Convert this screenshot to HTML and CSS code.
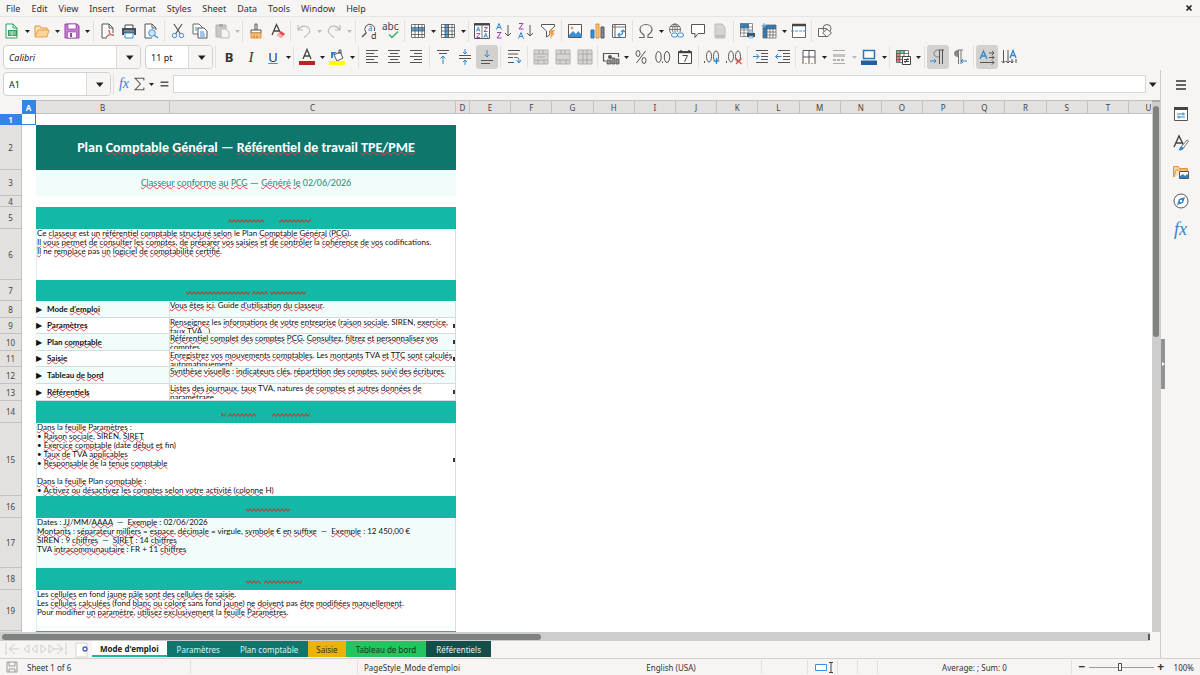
FILE: index.html
```html
<!DOCTYPE html>
<html lang="fr">
<head>
<meta charset="utf-8">
<title>Plan comptable</title>
<link rel="stylesheet" href="styles.css">
</head>
<body>
<svg class="defs" aria-hidden="true">
  <defs>
    <pattern id="zig" width="4" height="4" patternUnits="userSpaceOnUse"><path d="M0 3.500 2 .8 4 3.500" fill="none" stroke="#a0503f" stroke-width="1.200"/></pattern>
    <symbol id="drop" viewBox="0 0 8 16"><path d="M2 7h5L4.500 10z" fill="currentColor"/></symbol>
  </defs>
</svg>

<header>
  <nav class="menubar">
    <button>File</button><button>Edit</button><button>View</button><button>Insert</button><button>Format</button><button>Styles</button><button>Sheet</button><button>Data</button><button>Tools</button><button>Window</button><button>Help</button>
    <button class="close" aria-label="Close document"><svg viewBox="0 0 8 8"><path d="M1.500 1.500l5 5m0-5l-5 5" stroke="#222" stroke-width="1.700"/></svg></button>
  </nav>

  <div class="toolbar">
    <button aria-label="New"><svg viewBox="0 0 16 16"><path d="M2 1h7l4 4v10H2z" fill="#fff" stroke="#2f9e5b"/><path d="M9 1v4h4" fill="none" stroke="#2f9e5b"/><path d="M4 7h9v6H4z" fill="#2f9e5b"/><path d="M5 9h7M5 11h7M8 8v5" stroke="#dff5e6" stroke-width=".8"/></svg></button>
    <button class="arrow" aria-label="New options"><svg><use href="#drop"/></svg></button>
    <button aria-label="Open"><svg viewBox="0 0 16 16"><path d="M1 13V3h5l1 2h6v2" fill="#fbe3bd" stroke="#e0963a"/><path d="M1 14 4 7h11l-2 7z" fill="#fbd49a" stroke="#e8a04a"/></svg></button>
    <button class="arrow" aria-label="Open options"><svg><use href="#drop"/></svg></button>
    <button aria-label="Save"><svg viewBox="0 0 16 16"><path d="M1 1h12l2 2v12H1z" fill="#c77fd0" stroke="#9a3fa8"/><path d="M4 1h8v5H4zM3.500 9h9v6h-9z" fill="#fff" stroke="#9a3fa8" stroke-width=".7"/><path d="M6 10h2v4H6z" fill="#9a3fa8"/></svg></button>
    <button class="arrow" aria-label="Save options"><svg><use href="#drop"/></svg></button>
    <i class="sep"></i>
    <button aria-label="Export as PDF"><svg viewBox="0 0 16 16"><path d="M3 1h7l4 4v5M3 1v14h5" fill="#fff" stroke="#555"/><path d="M10 1v4h4" fill="none" stroke="#555"/><path d="M7 14c4-2 4-5 3-7 0 4 3 6 5 5-3-1-6 0-8 2z" fill="none" stroke="#e0535b"/></svg></button>
    <button aria-label="Print"><svg viewBox="0 0 16 16"><path d="M4 5V2h8v3" fill="#fff" stroke="#444"/><path d="M1 5h14v7h-2v-2H3v2H1z" fill="#4a5054"/><path d="M4 10h8v5H4z" fill="#fff" stroke="#3b8fd6"/><path d="M3 8h10" stroke="#8fc4ee"/></svg></button>
    <button aria-label="Print preview"><svg viewBox="0 0 16 16"><path d="M9 15H2V1h7l4 4v2" fill="#fff" stroke="#555"/><path d="M9 1v4h4" fill="none" stroke="#555"/><circle cx="9" cy="10" r="3.300" fill="#cfe6f8" stroke="#3b8fd6"/><path d="M11.500 12.500 15 15" stroke="#3b8fd6" stroke-width="1.300"/></svg></button>
    <i class="sep"></i>
    <button aria-label="Cut"><svg viewBox="0 0 16 16"><path d="M4 1l6.500 10M12 1 5.500 11" stroke="#555" stroke-width="1.200"/><circle cx="4.500" cy="12.500" r="2.200" fill="none" stroke="#3b8fd6"/><circle cx="11.500" cy="12.500" r="2.200" fill="none" stroke="#3b8fd6"/></svg></button>
    <button aria-label="Copy"><svg viewBox="0 0 16 16"><path d="M1 1h6l3 3v7H1z" fill="#fff" stroke="#666"/><path d="M6 5h6l3 3v7H6z" fill="#fff" stroke="#555"/><path d="M3 5h3M3 7h2M8 9h4M8 11h5M8 13h5" stroke="#3b8fd6"/></svg></button>
    <button disabled aria-label="Paste"><svg viewBox="0 0 16 16"><path d="M2 2h10v12H2z" fill="#c9c8c6" stroke="#b0afad"/><path d="M5 1h4v3H5z" fill="#aaa"/><path d="M7 6h5l3 3v6H7z" fill="#f5f4f2" stroke="#bbb"/></svg></button>
    <button class="arrow" disabled aria-label="Paste options"><svg><use href="#drop"/></svg></button>
    <i class="sep tight"></i>
    <button aria-label="Clone formatting"><svg viewBox="0 0 16 16"><path d="M7 1h2v6H7z" fill="#fff" stroke="#555"/><path d="M3 7h10v3H3z" fill="#fff" stroke="#555"/><path d="M3 10h10v5H3z" fill="#fbc27e" stroke="#e8913a"/><path d="M6 12v3M9 12v3" stroke="#d97a20"/></svg></button>
    <button aria-label="Clear formatting"><svg viewBox="0 0 16 16"><path d="M2 12 6.500 1.500 10 9M4 8h5" fill="none" stroke="#444" stroke-width="1.300"/><path d="M7 12l4-4 4 3-4 4z" fill="#e5484d"/><path d="M7 12l2-2 4 3-2 2z" fill="#f6b5b8"/></svg></button>
    <i class="sep tight"></i>
    <button disabled aria-label="Undo"><svg viewBox="0 0 16 16"><path d="M2 2v5h5M2.500 6.500C5 2.500 11 2 13 5.500s0 5-5 9" fill="none" stroke="#bdbcba" stroke-width="1.200"/></svg></button>
    <button class="arrow" disabled aria-label="Undo list"><svg><use href="#drop"/></svg></button>
    <button disabled aria-label="Redo"><svg viewBox="0 0 16 16"><path d="M14 2v5H9M13.500 6.500C11 2.500 5 2 3 5.500s0 5 5 9" fill="none" stroke="#bdbcba" stroke-width="1.200"/></svg></button>
    <button class="arrow" disabled aria-label="Redo list"><svg><use href="#drop"/></svg></button>
    <i class="sep"></i>
    <button aria-label="Find and replace"><svg viewBox="0 0 16 16"><path d="M5 9.500A5 5 0 1 1 13.500 8" fill="none" stroke="#555"/><path d="M5.500 9.500 1 14" stroke="#555" stroke-width="1.500"/><text x="7" y="8" font-size="8" fill="#2a86cf">a</text><text x="10" y="16" font-size="9" fill="#333">d</text></svg></button>
    <button aria-label="Spelling"><svg viewBox="0 0 16 16"><text x="-1" y="7" font-size="10" fill="#444">abc</text><path d="M6 11.500l3 3 6-6" fill="none" stroke="#33b36b" stroke-width="1.500"/></svg></button>
    <i class="sep"></i>
    <button aria-label="Row"><svg viewBox="0 0 16 16"><path d="M1 1h14v14H1z" fill="#fff"/><path d="M1 5h14v3H1z" fill="#4fa3e3"/><path d="M1.500 1.500h13v13h-13zM1 4.500h14M1 8h14M1 11.500h14M5 1v14M8.500 1v14M12 1v14" fill="none" stroke="#555" stroke-width=".8"/></svg></button>
    <button class="arrow" aria-label="Row options"><svg><use href="#drop"/></svg></button>
    <button aria-label="Column"><svg viewBox="0 0 16 16"><path d="M1 1h14v14H1z" fill="#fff"/><path d="M5 1h4v14H5z" fill="#4fa3e3"/><path d="M1.500 1.500h13v13h-13zM1 4.500h14M1 8h14M1 11.500h14M5 1v14M8.500 1v14M12 1v14" fill="none" stroke="#555" stroke-width=".8"/></svg></button>
    <button class="arrow" aria-label="Column options"><svg><use href="#drop"/></svg></button>
    <i class="sep tight"></i>
    <button aria-label="Sort"><svg viewBox="0 0 16 16"><path d="M.5.500h15v15H.5z" fill="#fff" stroke="#555"/><path d="M0 1.500h16" stroke="#444" stroke-width="2"/><path d="M8 2v14" stroke="#777"/><g fill="none" stroke="#2a86cf" stroke-width=".9"><path d="M2.500 8.500 4.250 4 6 8.500M3 7h2.500M10 14.500l1.750-4.500 1.750 4.500M10.500 13H13"/></g><g fill="none" stroke="#a33bb5" stroke-width=".9"><path d="M2.500 10.500H6l-3.500 4H6M10 4.500h3.500L10 8.500h3.500"/></g></svg></button>
    <button aria-label="Sort ascending"><svg viewBox="0 0 16 16"><path d="M.5 6.500 3 .5l2.500 6M1.500 4.500h3" fill="none" stroke="#2a86cf"/><path d="M1 9.500h4l-4 5.500h4.500" fill="none" stroke="#a33bb5"/><path d="M12 2v11m-3-3 3 3 3-3" fill="none" stroke="#555"/></svg></button>
    <button aria-label="Sort descending"><svg viewBox="0 0 16 16"><path d="M1 .5h4L1 6h4.500" fill="none" stroke="#a33bb5"/><path d="M.5 15.500 3 9.500l2.500 6M1.500 13.500h3" fill="none" stroke="#2a86cf"/><path d="M12 2v11m-3-3 3 3 3-3" fill="none" stroke="#555"/></svg></button>
    <button aria-label="AutoFilter"><svg viewBox="0 0 16 16"><path d="M1.500 1.500h13v2L9.500 8v4l-3 2V8l-5-4.500z" fill="#fff" stroke="#555"/><path d="M10 7h5l-2 3h2l-5 6 1-5H9z" fill="#f2a44a"/></svg></button>
    <i class="sep"></i>
    <button aria-label="Insert image"><svg viewBox="0 0 16 16"><path d="M1.500 1.500h13v13h-13z" fill="#fff" stroke="#555"/><circle cx="5" cy="5" r="1.500" fill="#f2a44a"/><path d="M2 14v-2l4-4 3 3 2-3 4 4v2z" fill="#3b8fd6"/></svg></button>
    <button aria-label="Insert chart"><svg viewBox="0 0 16 16"><path d="M2 7h3v8H2z" fill="#3b8fd6" stroke="#2670b0"/><path d="M7 1h3v14H7z" fill="#fbc27e" stroke="#dc9238"/><path d="M12 4h3v11h-3z" fill="#888" stroke="#555"/></svg></button>
    <button aria-label="Pivot table"><svg viewBox="0 0 16 16"><path d="M1.500 1.500h13v13h-13z" fill="#fff" stroke="#666"/><path d="M2 4h12M4 2v12" stroke="#777" stroke-width="1.200"/><path d="M7 12h2c2 0 3-2 3-5m-2 2 2-2 2 2M9 10l-2 2 2 2" fill="none" stroke="#3b8fd6" stroke-width="1.200"/></svg></button>
    <i class="sep"></i>
    <button aria-label="Special character"><svg viewBox="0 0 16 16"><path d="M1 14.500h5V12C3 10 2 8.500 2 6.500 2 3.500 4.500 1.500 8 1.500s6 2 6 5c0 2-1 3.500-4 5.500v2.500h5" fill="none" stroke="#666" stroke-width="1.200"/></svg></button>
    <button class="arrow" aria-label="Special character list"><svg><use href="#drop"/></svg></button>
    <button aria-label="Hyperlink"><svg viewBox="0 0 16 16"><circle cx="7" cy="6.500" r="5.500" fill="none" stroke="#666"/><path d="M1.500 6.500h11M7 1v11M3 3.500h8M3 9.500h5" stroke="#666" stroke-width=".8"/><ellipse cx="7" cy="6.500" rx="2.500" ry="5.500" fill="none" stroke="#666" stroke-width=".8"/><path d="M3 9h13v7H3z" fill="#f5f4f2"/><rect x="3.500" y="10" width="6" height="4" rx="2" fill="none" stroke="#3b8fd6"/><rect x="9.500" y="10" width="6" height="4" rx="2" fill="none" stroke="#3b8fd6"/></svg></button>
    <button aria-label="Comment"><svg viewBox="0 0 16 16"><path d="M1.500 1.500h13v9H8l-3 4v-4H1.500z" fill="#fff" stroke="#555"/></svg></button>
    <button disabled aria-label="Headers and footers"><svg viewBox="0 0 16 16"><path d="M3 1h7l3 3v11H3z" fill="#d5d4d2" stroke="#bbb"/><path d="M4 12h8v2H4z" fill="#bbb"/></svg></button>
    <i class="sep"></i>
    <button aria-label="Define print area"><svg viewBox="0 0 16 16"><path d="M1.500.500h12v13h-12z" fill="#fff"/><path d="M1 .5h9v5H1z" fill="#2f86cc"/><path d="M1.500.500h12v13h-12zM1 4h13M1 7h13M1 10h13M5 1v13M9 1v13" fill="none" stroke="#666" stroke-width=".7"/><path d="M8 10h8v4H8z" fill="#4a5054"/><path d="M10 8h4v2h-4zM10 13h4v2h-4z" fill="#d6eafa" stroke="#3b8fd6" stroke-width=".6"/></svg></button>
    <button aria-label="Freeze rows and columns"><svg viewBox="0 0 16 16"><path d="M2 2h13v13H2z" fill="#fff"/><path d="M2 2h13v4H2zM2 2h4v13H2z" fill="#2f86cc"/><path d="M2 2h13v13H2zM2 6h13M2 9h13M2 12h13M6 2v13M9 2v13M12 2v13" fill="none" stroke="#555" stroke-width=".7"/><path d="M3 0v5M.5 2.500h5" stroke="#6ab4ee"/></svg></button>
    <button class="arrow" aria-label="Freeze options"><svg><use href="#drop"/></svg></button>
    <button aria-label="Split window"><svg viewBox="0 0 16 16"><path d="M1.500 1.500h13v13h-13z" fill="#fff" stroke="#666"/><path d="M1 2h14" stroke="#444" stroke-width="2.500"/><path d="M0 8h16" stroke="#3b8fd6" stroke-dasharray="3 1"/></svg></button>
    <i class="sep tight"></i>
    <button aria-label="Draw functions"><svg viewBox="0 0 16 16"><path d="M1.500 5.500h8v8h-8z" fill="#fff" stroke="#666"/><circle cx="10" cy="5.500" r="4" fill="none" stroke="#666"/><path d="M10 6l4.500 4-4.500 4-4.500-4z" fill="#f5f4f2" stroke="#666"/></svg></button>
  </div>

  <div class="toolbar format">
    <div class="combo font"><input aria-label="Font name" value="Calibri"><button aria-label="Font list"><svg><use href="#drop"/></svg></button></div>
    <div class="combo size"><input aria-label="Font size" value="11 pt"><button aria-label="Size list"><svg><use href="#drop"/></svg></button></div>
    <i class="sep"></i>
    <button class="letter bold" aria-label="Bold">B</button>
    <button class="letter italic" aria-label="Italic">I</button>
    <button class="letter under" aria-label="Underline">U</button>
    <button class="arrow" aria-label="Underline options"><svg><use href="#drop"/></svg></button>
    <i class="sep tight"></i>
    <button aria-label="Font color"><svg viewBox="0 0 16 16"><path d="M4 10 8 .5 12 10M5.500 7h5" fill="none" stroke="#444" stroke-width="1.300"/><path d="M0 12h16v4H0z" fill="#c0211f"/></svg></button>
    <button class="arrow" aria-label="Font color options"><svg><use href="#drop"/></svg></button>
    <button aria-label="Highlighting"><svg viewBox="0 0 16 16"><path d="M5 6l6-3 3 6-6 3z" fill="#fff" stroke="#555"/><path d="M10 5V1h2v4" fill="none" stroke="#555"/><path d="M2 9V3h6L4 6v3z" fill="#2f86cc"/><path d="M0 12h16v4H0z" fill="#ff0"/></svg></button>
    <button class="arrow" aria-label="Highlighting options"><svg><use href="#drop"/></svg></button>
    <i class="sep"></i>
    <button aria-label="Align left"><svg viewBox="0 0 16 16"><path d="M2 1.500h12M2 4.500h8M2 7.500h12M2 10.500h8M2 13.500h12" stroke="#555"/></svg></button>
    <button aria-label="Align center"><svg viewBox="0 0 16 16"><path d="M2 1.500h12M4 4.500h8M2 7.500h12M4 10.500h8M2 13.500h12" stroke="#555"/></svg></button>
    <button aria-label="Align right"><svg viewBox="0 0 16 16"><path d="M2 1.500h12M6 4.500h8M2 7.500h12M6 10.500h8M2 13.500h12" stroke="#555"/></svg></button>
    <i class="sep"></i>
    <button aria-label="Align top"><svg viewBox="0 0 16 16"><path d="M2 1.500h12M4 4.500h8" stroke="#555"/><path d="M8 15V7M5.500 9.500 8 7l2.500 2.500" fill="none" stroke="#2f86cc"/></svg></button>
    <button aria-label="Center vertically"><svg viewBox="0 0 16 16"><path d="M2 6.500h12M2 9.500h12" stroke="#555"/><path d="M8 0v5M6 3l2 2 2-2M8 16v-5M6 13l2-2 2 2" fill="none" stroke="#2f86cc"/></svg></button>
    <button class="on" aria-label="Align bottom"><svg viewBox="0 0 16 16"><path d="M2 11.500h12M2 14.500h9" stroke="#555"/><path d="M8 1v7M5.500 5.500 8 8l2.500-2.500" fill="none" stroke="#2f86cc"/></svg></button>
    <i class="sep"></i>
    <button aria-label="Wrap text"><svg viewBox="0 0 16 16"><path d="M2 1.500h12M2 5h10M2 8.500h5M2 13.500h6" stroke="#555"/><path d="M8 8.500h3c2 0 2 2 2 5M10.500 11l2.500 3 2-3" fill="none" stroke="#2f86cc"/></svg></button>
    <i class="sep"></i>
    <button disabled aria-label="Merge and center"><svg viewBox="0 0 16 16"><path d="M1 1h14v14H1z" fill="#d6d5d3" stroke="#b3b2b0"/><path d="M1 5h14M1 11h14M6 1v4m4-4v4M5 11v4m6-4v4M4 8h8" stroke="#aaa9a7"/></svg></button>
    <button disabled aria-label="Merge cells"><svg viewBox="0 0 16 16"><path d="M1 1h14v14H1z" fill="#d6d5d3" stroke="#b3b2b0"/><path d="M1 5h14M1 11h14M6 1v4m4-4v4M5 11v4m6-4v4" stroke="#aaa9a7"/></svg></button>
    <button disabled aria-label="Unmerge cells"><svg viewBox="0 0 16 16"><path d="M1 1h14v14H1z" fill="#d6d5d3" stroke="#b3b2b0"/><path d="M1 5h14M1 11h14M6 1v14m4-14v14" stroke="#aaa9a7"/></svg></button>
    <i class="sep tight"></i>
    <button aria-label="Format as currency"><svg viewBox="0 0 16 16"><path d="M3 12H.5V4.500h15V8" fill="none" stroke="#555" stroke-width="1.200"/><circle cx="7" cy="8" r="2" fill="#555"/><path d="M4 11h4v4H4zM9 9h3v6H9zM13 10h3v5h-3z" fill="#999" stroke="#444" stroke-width=".7"/></svg></button>
    <button class="arrow" aria-label="Currency list"><svg><use href="#drop"/></svg></button>
    <button aria-label="Format as percent"><svg viewBox="0 0 16 16"><path d="M12.500 2l-9 12" stroke="#555"/><ellipse cx="5" cy="4.500" rx="2" ry="3" fill="none" stroke="#555"/><ellipse cx="11" cy="11.500" rx="2" ry="3" fill="none" stroke="#555"/></svg></button>
    <button aria-label="Format as number"><svg viewBox="0 0 16 16"><ellipse cx="3.500" cy="8" rx="2.700" ry="5.500" fill="none" stroke="#555"/><ellipse cx="12" cy="8" rx="2.700" ry="5.500" fill="none" stroke="#555"/><path d="M7.500 12.500v1.500" stroke="#555"/></svg></button>
    <button aria-label="Format as date"><svg viewBox="0 0 16 16"><path d="M1.500 2.500h13v12h-13z" fill="#fff" stroke="#444"/><path d="M1 3.500h14M4 1v3M12 1v3" stroke="#444" stroke-width="1.500"/><path d="M5.500 6.500h5L7.500 13" fill="none" stroke="#444"/></svg></button>
    <i class="sep"></i>
    <button aria-label="Add decimal place"><svg viewBox="0 0 16 16"><path d="M.5 12v2" stroke="#555"/><ellipse cx="5" cy="7.500" rx="2.500" ry="5.500" fill="none" stroke="#555"/><ellipse cx="12" cy="7.500" rx="2.500" ry="5.500" fill="none" stroke="#555"/><path d="M12.500 9v6M9.500 12h6" stroke="#2f86cc" stroke-width="1.200"/></svg></button>
    <button aria-label="Delete decimal place"><svg viewBox="0 0 16 16"><path d="M.5 12v2" stroke="#555"/><ellipse cx="5" cy="7.500" rx="2.500" ry="5.500" fill="none" stroke="#555"/><ellipse cx="12" cy="7.500" rx="2.500" ry="5.500" fill="none" stroke="#555"/><path d="M10 9.500l5.500 5.500m0-5.500L10 15" stroke="#e04a50" stroke-width="1.200"/></svg></button>
    <i class="sep"></i>
    <button aria-label="Increase indent"><svg viewBox="0 0 16 16"><path d="M3 1.500h12M8 4.500h7M8 7.500h7M8 10.500h7M3 13.500h12" stroke="#555"/><path d="M0 7.500h6M3.500 5 6 7.500 3.500 10" fill="none" stroke="#2f86cc"/></svg></button>
    <button aria-label="Decrease indent"><svg viewBox="0 0 16 16"><path d="M3 1.500h12M8 4.500h7M8 7.500h7M8 10.500h7M3 13.500h12" stroke="#555"/><path d="M6.500 7.500h-6M3 5 .5 7.500 3 10" fill="none" stroke="#2f86cc"/></svg></button>
    <i class="sep tight"></i>
    <button aria-label="Borders"><svg viewBox="0 0 16 16"><path d="M2 15V1.500h12V15M8 1v14M2 8h12" fill="#fff" stroke="#555"/><path d="M1 14.500h14" stroke="#e8a04a" stroke-dasharray="2 1"/></svg></button>
    <button class="arrow" aria-label="Borders options"><svg><use href="#drop"/></svg></button>
    <button disabled aria-label="Border style"><svg viewBox="0 0 16 16"><path d="M2 1.500h12M2 14.500h12" stroke="#aaa"/><path d="M2 5h12v3H2z" fill="#c4c3c1"/><path d="M2 11h12" stroke="#b3b2b0" stroke-width="2" stroke-dasharray="3 1"/></svg></button>
    <button class="arrow" disabled aria-label="Border style options"><svg><use href="#drop"/></svg></button>
    <button aria-label="Border color"><svg viewBox="0 0 16 16"><path d="M2.500 1.500h11v8h-11z" fill="#fff" stroke="#2f76b5" stroke-width="1.500"/><path d="M0 11.500h16V16H0z" fill="#1f5fa5"/></svg></button>
    <button class="arrow" aria-label="Border color options"><svg><use href="#drop"/></svg></button>
    <i class="sep tight"></i>
    <button aria-label="Conditional formatting"><svg viewBox="0 0 16 16"><path d="M1.500 1.500h12v12h-12z" fill="#fff"/><path d="M1 1h9v3H1z" fill="#6fcf8f"/><path d="M1 4h4v9H1z" fill="#e77a7a"/><path d="M1.500 1.500h12v12h-12zM1 4.500h13M1 7.500h13M1 10.500h13M5 1v13M9 1v13" fill="none" stroke="#555" stroke-width=".8"/><path d="M7.500 7.500h8v8h-8z" fill="#fff" stroke="#444"/><path d="M9 10.500h5M9 12.500h5M13 9l-3 5" stroke="#444"/></svg></button>
    <button class="arrow" aria-label="Conditional formatting list"><svg><use href="#drop"/></svg></button>
    <i class="sep"></i>
    <button class="on" aria-label="Left to right"><svg viewBox="0 0 16 16"><path d="M9 1h5M9.500 1v14M12.500 1v14" stroke="#555"/><path d="M9 1C5 1 4 3 4 4.500S5 8 9 8" fill="none" stroke="#777"/><path d="M0 12h6M4 10l2 2-2 2" fill="none" stroke="#2f86cc"/></svg></button>
    <button aria-label="Right to left"><svg viewBox="0 0 16 16"><path d="M6 1h5M6.500 1v14M9 1v14" stroke="#777"/><path d="M6 1C3 1 2 3 2 4.500S3 8 6 8z" fill="#888"/><path d="M15 12H9M11 10l-2 2 2 2" fill="none" stroke="#2f86cc"/></svg></button>
    <i class="sep"></i>
    <button class="on" aria-label="Text direction horizontal"><svg viewBox="0 0 16 16"><path d="M1 10 4.500 2 8 10M2.500 7h4" fill="none" stroke="#2f86cc" stroke-width="1.300"/><path d="M10 4h5M13 2l2 2-2 2M10 8.500h5M13 6.500l2 2-2 2M1 13.500h14M13 11.500l2 2-2 2" fill="none" stroke="#555"/></svg></button>
    <button aria-label="Text direction vertical"><svg viewBox="0 0 16 16"><path d="M9 9 12 1.500 15 9M10 6.500h4" fill="none" stroke="#2f86cc" stroke-width="1.300"/><path d="M2.500 1v13M.5 12l2 2 2-2M7 1v13M5 12l2 2 2-2M11 10v4M9.500 12l1.500 2 1.500-2M15 10v4" fill="none" stroke="#555"/></svg></button>
  </div>
</header>

<main>
  <section class="work">
    <div class="formula">
      <div class="combo name"><input aria-label="Name box" value="A1"><button aria-label="Names"><svg><use href="#drop"/></svg></button></div>
      <i class="sep"></i>
      <button class="fx" aria-label="Function wizard">fx</button>
      <button class="sigma" aria-label="Select function"><svg viewBox="0 0 16 16"><path d="M13 4V1.500H3l6 6.500-6 6.500h10V12" fill="none" stroke="#555" stroke-width="1.200"/></svg></button>
      <button class="arrow" aria-label="Function list"><svg><use href="#drop"/></svg></button>
      <button class="eq" aria-label="Formula"><svg viewBox="0 0 16 16"><path d="M4 6h9M4 10h9" stroke="#555" stroke-width="1.800"/></svg></button>
      <input class="line" aria-label="Input line">
      <button class="expand" aria-label="Expand formula bar"><svg><use href="#drop"/></svg></button>
    </div>

    <div class="view">
      <div class="sheet">
        <table>
          <colgroup><col class="c-num"><col class="c-a"><col class="c-b"><col class="c-c"><col class="c-d"><col span="16"><col class="c-u"></colgroup>
          <thead><tr><td class="corner"></td><th class="sel">A</th><th>B</th><th>C</th><th>D</th><th>E</th><th>F</th><th>G</th><th>H</th><th>I</th><th>J</th><th>K</th><th>L</th><th>M</th><th>N</th><th>O</th><th>P</th><th>Q</th><th>R</th><th>S</th><th>T</th><th class="cut">U</th></tr></thead>
          <tbody>
            <tr class="h11"><th class="sel">1</th><td class="cursor"></td><td colspan="2"></td><td colspan="18"></td></tr>
            <tr class="h45"><th>2</th><td></td><td colspan="2" class="title">Plan <u>Comptable</u> <u>Général</u> — <u>Référentiel</u> <u>de</u> travail <u>TPE/PME</u></td></tr>
            <tr class="h26"><th>3</th><td></td><td colspan="2" class="sub"><u>Classeur</u> <u>conforme</u> <u>au</u> <u>PCG</u> — <u>Généré</u> <u>le</u> 02/06/2026</td></tr>
            <tr class="h11"><th>4</th><td></td><td colspan="2"></td></tr>
            <tr class="h22"><th>5</th><td></td><td colspan="2" class="band"><svg viewBox="0 0 420 4"><path d="M192 0h36v4h-36zM243 0h32v4h-32z" fill="url(#zig)"/></svg></td></tr>
            <tr class="h51"><th>6</th><td></td><td colspan="2" class="note"><p>Ce <u>classeur</u> est <u>un</u> <u>référentiel</u> <u>comptable</u> <u>structuré</u> <u>selon</u> le Plan <u>Comptable</u> <u>Général</u> (<u>PCG</u>).</p><p><u>Il</u> <u>vous</u> <u>permet</u> <u>de</u> <u>consulter</u> <u>les</u> <u>comptes</u>, <u>de</u> <u>préparer</u> <u>vos</u> <u>saisies</u> <u>et</u> <u>de</u> <u>contrôler</u> la <u>cohérence</u> <u>de</u> <u>vos</u> codifications.</p><p><u>Il</u> ne <u>remplace</u> pas <u>un</u> <u>logiciel</u> <u>de</u> <u>comptabilité</u> <u>certifié</u>.</p></td></tr>
            <tr class="h21"><th>7</th><td></td><td colspan="2" class="band"><svg viewBox="0 0 420 4"><path d="M150 0h64v4h-64zM216 0h16v4h-16zM234 0h36v4h-36z" fill="url(#zig)"/></svg></td></tr>
            <tr class="h17 item mint"><th>8</th><td></td><td class="key"><b>▶</b>Mode <u>d'emploi</u></td><td class="desc"><div><u>Vous</u> <u>êtes</u> <u>ici</u>. Guide <u>d'utilisation</u> <u>du</u> <u>classeur</u>.</div></td></tr>
            <tr class="h16 item"><th>9</th><td></td><td class="key"><b>▶</b><u>Paramètres</u></td><td class="desc more"><div><u>Renseignez</u> les <u>informations</u> <u>de</u> <u>votre</u> <u>entreprise</u> (<u>raison</u> <u>sociale</u>, SIREN, <u>exercice</u>,<br><u>taux</u> TVA...).</div></td></tr>
            <tr class="h17 item mint"><th>10</th><td></td><td class="key"><b>▶</b>Plan <u>comptable</u></td><td class="desc more"><div><u>Référentiel</u> <u>complet</u> <u>des</u> <u>comptes</u> <u>PCG</u>. <u>Consultez</u>, <u>filtrez</u> <u>et</u> <u>personnalisez</u> <u>vos</u><br><u>comptes</u>.</div></td></tr>
            <tr class="h16 item"><th>11</th><td></td><td class="key"><b>▶</b><u>Saisie</u></td><td class="desc more"><div><u>Enregistrez</u> <u>vos</u> <u>mouvements</u> <u>comptables</u>. Les <u>montants</u> TVA <u>et</u> <u>TTC</u> <u>sont</u> <u>calculés</u><br><u>automatiquement</u>.</div></td></tr>
            <tr class="h17 item mint"><th>12</th><td></td><td class="key"><b>▶</b>Tableau <u>de</u> <u>bord</u></td><td class="desc"><div><u>Synthèse</u> <u>visuelle</u> : <u>indicateurs</u> <u>clés</u>, <u>répartition</u> <u>des</u> <u>comptes</u>, <u>suivi</u> <u>des</u> <u>écritures</u>.</div></td></tr>
            <tr class="h17 item"><th>13</th><td></td><td class="key"><b>▶</b><u>Référentiels</u></td><td class="desc more"><div><u>Listes</u> <u>des</u> <u>journaux</u>, <u>taux</u> TVA, natures <u>de</u> <u>comptes</u> <u>et</u> <u>autres</u> <u>données</u> <u>de</u><br><u>paramétrage</u>.</div></td></tr>
            <tr class="h22"><th>14</th><td></td><td colspan="2" class="band"><svg viewBox="0 0 420 4"><path d="M185 0h5v4h-5zM192 0h28v4h-28zM236 0h38v4h-38z" fill="url(#zig)"/></svg></td></tr>
            <tr class="h73"><th>15</th><td></td><td colspan="2" class="note more"><p><u>Dans</u> la <u>feuille</u> <u>Paramètres</u> :</p><p>• <u>Raison</u> <u>sociale</u>, SIREN, <u>SIRET</u></p><p>• <u>Exercice</u> <u>comptable</u> (date <u>début</u> <u>et</u> fin)</p><p>• <u>Taux</u> <u>de</u> TVA <u>applicables</u></p><p>• <u>Responsable</u> <u>de</u> la <u>tenue</u> <u>comptable</u></p><p>&nbsp;</p><p><u>Dans</u> la <u>feuille</u> Plan <u>comptable</u> :</p><p>• <u>Activez</u> <u>ou</u> <u>désactivez</u> <u>les</u> <u>comptes</u> <u>selon</u> <u>votre</u> <u>activité</u> (<u>colonne</u> H)</p></td></tr>
            <tr class="h22"><th>16</th><td></td><td colspan="2" class="band"><svg viewBox="0 0 420 4"><path d="M210 0h44v4h-44z" fill="url(#zig)"/></svg></td></tr>
            <tr class="h50"><th>17</th><td></td><td colspan="2" class="note mint"><p>Dates : <u>JJ</u>/MM/<u>AAAA</u> &nbsp;—&nbsp; <u>Exemple</u> : 02/06/2026</p><p><u>Montants</u> : <u>séparateur</u> <u>milliers</u> = <u>espace</u>, <u>décimale</u> = virgule, <u>symbole</u> € <u>en</u> <u>suffixe</u> &nbsp;—&nbsp; <u>Exemple</u> : 12 450,00 €</p><p>SIREN : 9 <u>chiffres</u> &nbsp;—&nbsp; <u>SIRET</u> : 14 <u>chiffres</u></p><p>TVA <u>intracommunautaire</u> : FR + 11 <u>chiffres</u></p></td></tr>
            <tr class="h22"><th>18</th><td></td><td colspan="2" class="band"><svg viewBox="0 0 420 4"><path d="M210 0h15v4h-15zM228 0h38v4h-38z" fill="url(#zig)"/></svg></td></tr>
            <tr class="h41"><th>19</th><td></td><td colspan="2" class="note"><p>Les <u>cellules</u> en fond <u>jaune</u> <u>pâle</u> <u>sont</u> <u>des</u> <u>cellules</u> <u>de</u> <u>saisie</u>.</p><p>Les <u>cellules</u> <u>calculées</u> (fond <u>blanc</u> <u>ou</u> <u>coloré</u> sans fond <u>jaune</u>) <u>ne</u> <u>doivent</u> pas <u>être</u> <u>modifiées</u> <u>manuellement</u>.</p><p>Pour modifier <u>un</u> <u>paramètre</u>, <u>utilisez</u> <u>exclusivement</u> la <u>feuille</u> <u>Paramètres</u>.</p></td></tr>
            <tr class="h22"><th></th><td></td><td colspan="2" class="band"></td></tr>
          </tbody>
        </table>
      </div>
      <div class="vscroll"><span></span></div>
    </div>

    <div class="hscroll"><span></span></div>

    <div class="tabs">
      <svg class="nav" viewBox="0 0 62 14"><path d="M1 1v12M10 2 4 7l6 5M4 7h10M24 3l-5 4 5 4zM32 3l-5 4 5 4zM36 3l5 4-5 4zM44 3l5 4-5 4zM52 2l6 5-6 5M48 7h10M61 1v12" fill="none" stroke="#cfcecb"/></svg>
      <button class="add" aria-label="Add sheet"><svg viewBox="0 0 14 16"><path d="M1 1h11v14H1z" fill="#fff" stroke="#d5d4d2"/><circle cx="10" cy="7" r="2" fill="#fff" stroke="#3a62b8" stroke-width="1.300"/></svg></button>
      <button class="tab current">Mode d'emploi</button><button class="tab teal">Paramètres</button><button class="tab teal">Plan comptable</button><button class="tab amber">Saisie</button><button class="tab green">Tableau de bord</button><button class="tab dark">Référentiels</button>
    </div>
  </section>

  <aside>
    <button class="grip" aria-label="Hide sidebar"><svg viewBox="0 0 4 6"><path d="M1 1l3 2-3 2z" fill="#fff"/></svg></button>
    <button aria-label="Sidebar settings"><svg viewBox="0 0 16 16"><path d="M3 4h10M3 8h10M3 12h10" stroke="#333" stroke-width="1.500"/></svg></button>
    <button aria-label="Properties"><svg viewBox="0 0 16 16"><path d="M1.500 1.500h13v13h-13z" fill="#fff" stroke="#555"/><path d="M1 2.500h14" stroke="#444" stroke-width="3"/><path d="M4 8h8M4 11h8M10 6.500v3M6 9.500v3" stroke="#2f86cc"/></svg></button>
    <button aria-label="Styles"><svg viewBox="0 0 16 16"><path d="M1 12 6 1l5 10M3 8h6" fill="none" stroke="#444" stroke-width="1.400"/><path d="M15.500 6l-5 7-2-1.500L14 5z" fill="#fff" stroke="#555" stroke-width=".8"/><path d="M5 15c2 0 1-3 3.500-3.500l2 1.500c0 2-3 3-5.500 2z" fill="#2f86cc"/></svg></button>
    <button aria-label="Gallery"><svg viewBox="0 0 16 16"><path d="M.5 13V2.500h5l1 2h8V7" fill="#fbd49a" stroke="#e8913a"/><path d="M1 13 3 6h12" fill="#fbe3bd" stroke="#e8913a"/><path d="M6.500 7.500h9v7h-9z" fill="#fff" stroke="#555"/><path d="M7 14v-2l3-2 2 2 2-2 1 1v3z" fill="#2f86cc"/></svg></button>
    <button aria-label="Navigator"><svg viewBox="0 0 16 16"><circle cx="8" cy="8" r="7" fill="#fff" stroke="#555"/><path d="M12 4 10 10 4 12 6 6z" fill="#2f86cc"/><circle cx="8" cy="8" r="1.200" fill="#fff"/></svg></button>
    <button class="fx" aria-label="Functions">fx</button>
  </aside>
</main>

<footer>
  <div class="doc"><svg viewBox="0 0 12 12"><path d="M1 1h10v10H1zM3 1v4h6V1M3 11V8h6v3" fill="none" stroke="#999"/></svg><span>Sheet 1 of 6</span></div>
  <div></div>
  <div>PageStyle_Mode d'emploi</div>
  <div class="mid plain">English (USA)</div>
  <div></div>
  <div class="mode"><svg viewBox="0 0 22 12"><path d="M1.500 3.500h11v6h-11z" fill="#fff" stroke="#3b8fd6"/><path d="M15 1.500h4M15 11.500h4M17 1.500v10" stroke="#444"/></svg></div>
  <div></div>
  <div></div>
  <div class="mid">Average: ; Sum: 0</div>
  <div class="zoom"><button aria-label="Zoom out">−</button><input type="range" aria-label="Zoom" min="0" max="100" value="48"><button aria-label="Zoom in">+</button><span>100%</span></div>
</footer>
</body>
</html>
```
FILE: styles.css
```css
* { box-sizing: border-box; }
body {
  margin: 0;
  height: 100vh;
  display: flex;
  flex-direction: column;
  overflow: hidden;
  background: #f6f5f4;
  color: #333;
  font-family: "Noto Sans", sans-serif;
  font-size: 9px;
}
.defs { position: absolute; width: 0; height: 0; }
svg { overflow: visible; }
button {
  display: flex;
  align-items: center;
  justify-content: center;
  flex: none;
  margin: 0;
  padding: 0;
  border: 0;
  background: none;
  color: #333;
  font: inherit;
}
input { min-width: 0; font: inherit; color: #222; }

.menubar { display: flex; gap: 11px; height: 17px; padding: 0 7px 0 6px; border-bottom: 1px solid #e6e5e3; }
.menubar .close { margin-left: auto; }
.close svg { width: 8px; height: 8px; }

.toolbar { display: flex; align-items: center; height: 27px; padding-left: 1px; }
.format { height: 26px; }
.toolbar button { width: 22px; height: 24px; border-radius: 3px; }
.toolbar svg { width: 16px; height: 16px; }
.toolbar .arrow, .formula .arrow { width: 8px; }
.arrow svg, .toolbar .arrow svg { width: 8px; height: 16px; color: #222; }
.arrow:disabled svg, .toolbar .arrow:disabled svg { color: #bbb; }
.toolbar .on { background: #d3d1cd; }
.sep { flex: none; width: 1px; height: 22px; margin: 0 2px; background: #e2e1de; }
.tight { margin: 0 2px 0 1px; }
.letter { font-size: 13px; }
.bold { font-weight: 700; }
.italic { font-family: "Liberation Serif", serif; font-style: italic; font-size: 15px; }
.under { text-decoration: underline #3b8fd6; }

.combo {
  display: flex;
  height: 24px;
  border: 1px solid #d2d0cc;
  border-radius: 4px;
  background: #fff;
  overflow: hidden;
}
.combo input { flex: 1; border: 0; padding: 0 5px; background: none; }
.combo button { width: 24px; height: 100%; border-left: 1px solid #dddbd8; border-radius: 0; background: #f6f5f4; }
.combo svg, .toolbar .combo svg { width: 14px; height: 24px; color: #222; }
.font { width: 138px; margin: 0 4px 0 2px; }
.font input { font-style: italic; }
.size { width: 68px; }
.name { width: 108px; }

main { flex: 1; min-height: 0; display: flex; }
.work { flex: 1; min-width: 0; display: flex; flex-direction: column; border-right: 1px solid #cfcdca; }
.formula { display: flex; align-items: center; height: 30px; padding: 0 3px 2px; }
.fx { color: #2f86cc; font-family: "Liberation Serif", serif; font-style: italic; font-size: 14px; }
.formula .fx { width: 16px; }
.sigma svg { width: 15px; height: 14px; }
.eq { width: 18px; }
.eq svg { width: 14px; height: 14px; }
.line { flex: 1; height: 18px; padding: 0 4px; border: 1px solid #dad8d5; background: #fff; }
.expand { width: 11px; }
.expand svg { width: 14px; height: 24px; color: #222; }

.view { flex: 1; min-height: 0; display: flex; }
.sheet { flex: 1; min-width: 0; overflow: hidden; background: #fff; }
table { width: 100%; border-collapse: separate; border-spacing: 0; table-layout: fixed; font-family: Lato, Carlito, sans-serif; font-size: 8px; line-height: 9px; color: #111; }
.c-num { width: 22px; }
.c-a, .c-d { width: 14px; }
.c-b { width: 134px; }
.c-c { width: 286px; }
.c-u { width: 23px; }
td { padding: 0; }
th {
  padding: 0;
  background: #e2e1e0;
  border-right: 1px solid #c3c2c0;
  border-bottom: 1px solid #c3c2c0;
  color: #444;
  font: 8px "Noto Sans", sans-serif;
  line-height: 9px;
}
thead th { height: 14px; border-top: 1px solid #c3c2c0; }
th.cut { padding-left: 16px; border-right: 0; }
th.sel { background: #3584e4; border-color: #3584e4; color: #fff; font-weight: 700; }
.corner { background: #f6f5f4; }
.cursor { border: 1px solid #3584e4; border-top: 0; border-left: 0; }
.h11 { height: 11px; } .h16 { height: 16px; } .h17 { height: 17px; }
.h21 { height: 21px; } .h22 { height: 22px; } .h26 { height: 26px; }
.h41 { height: 41px; } .h45 { height: 45px; } .h50 { height: 50px; }
.h51 { height: 51px; } .h73 { height: 73px; }
.title, .sub { font-family: Carlito, Lato, sans-serif; text-align: center; }
.title { background: #0f766e; color: #fff; font-size: 14px; font-weight: 700; line-height: 18px; }
.sub { background: #f0fdfa; color: #2a8a7c; font-size: 10px; line-height: 12px; }
.band { background: #14b8a6; vertical-align: bottom; }
.band svg { display: block; width: 420px; height: 4px; margin-bottom: 6px; }
.note { vertical-align: top; border-left: 1px solid #dff0ee; border-right: 1px solid #d9dede; }
.note p { margin: 0; white-space: nowrap; }
.note.mint, .mint .key, .mint .desc { background-color: #f0fdfa; }
.key, .desc { border-right: 1px solid #d5dcdb; border-bottom: 1px solid #d5dcdb; }
.key { font-weight: 700; white-space: nowrap; }
.key b { display: inline-block; width: 11px; font-family: "DejaVu Sans", sans-serif; }
.desc { vertical-align: top; white-space: nowrap; }
.desc div { height: 15px; overflow: hidden; }
.more { background-image: linear-gradient(#333, #333); background-position: right center; background-size: 2px 4px; background-repeat: no-repeat; }
u { text-decoration: underline wavy #e0444c 1px; text-underline-offset: -1px; text-decoration-skip-ink: none; }

.vscroll { width: 8px; padding: 4px 1px 0; background: #cdcdcd; border-top: 2px solid #aaa; }
.vscroll span { display: block; height: 44%; border-radius: 3px; background: #7f8281; }
.hscroll { height: 9px; margin-right: 10px; padding: 2px; background: linear-gradient(#555, #555) right center / 2px 6px no-repeat #cdcdcd; }
.hscroll span { display: block; width: 47%; height: 6px; border-radius: 3px; background: #7f8281; }

.tabs { display: flex; height: 17px; padding: 0 5px; font-size: 8px; }
.nav { width: 62px; height: 14px; margin: 1px 8px 0 0; }
.add { width: 14px; margin-right: 3px; }
.add svg { width: 14px; height: 16px; }
.tab { height: 16px; padding: 0 10px; color: #d9f3ef; }
.current { padding: 0 8px; background: #fff; border-bottom: 2px solid #14b8a6; color: #222; font-weight: 700; }
.teal { background: #0f766e; }
.amber { background: #eab308; color: #3a2f00; padding: 0 8px; }
.green { background: #22c55e; color: #0a3a1c; }
.dark { background: #134e4a; color: #e6f5f3; }

aside { position: relative; width: 39px; display: flex; flex-direction: column; align-items: center; }
aside button { width: 24px; height: 29px; }
aside svg { width: 16px; height: 16px; }
aside .fx { font-size: 18px; }
aside .grip { position: absolute; left: 0; top: 50%; width: 4px; height: 50px; margin-top: -25px; background: #929292; }
.grip svg { width: 4px; height: 6px; }

footer {
  display: grid;
  grid-template-columns: 190fr 167fr 224fr 180fr 46fr 30fr 20fr 20fr 194fr 129fr;
  height: 17px;
  border-top: 1px solid #d3d1ce;
  font-size: 8px;
}
footer > div { display: flex; align-items: center; min-width: 0; margin: 1px 0; padding-left: 6px; border-left: 1px solid #e2e1de; white-space: nowrap; }
footer > div:first-child, footer > .plain { border-left: 0; }
footer > .mid { justify-content: center; padding: 0; }
.doc { gap: 9px; }
.doc svg { width: 12px; height: 12px; }
.mode svg { flex: none; width: 22px; height: 12px; }
.zoom button { width: 8px; font-size: 12px; font-weight: 700; line-height: 12px; }
.zoom input { appearance: none; flex: 1; width: 0; height: 8px; margin: 0 3px; background: linear-gradient(#999, #999) center / 100% 1px no-repeat; }
.zoom input::-webkit-slider-thumb { appearance: none; width: 4px; height: 8px; border: 1px solid #555; background: #fff; }
.zoom span { margin: 0 6px 0 9px; }
```
